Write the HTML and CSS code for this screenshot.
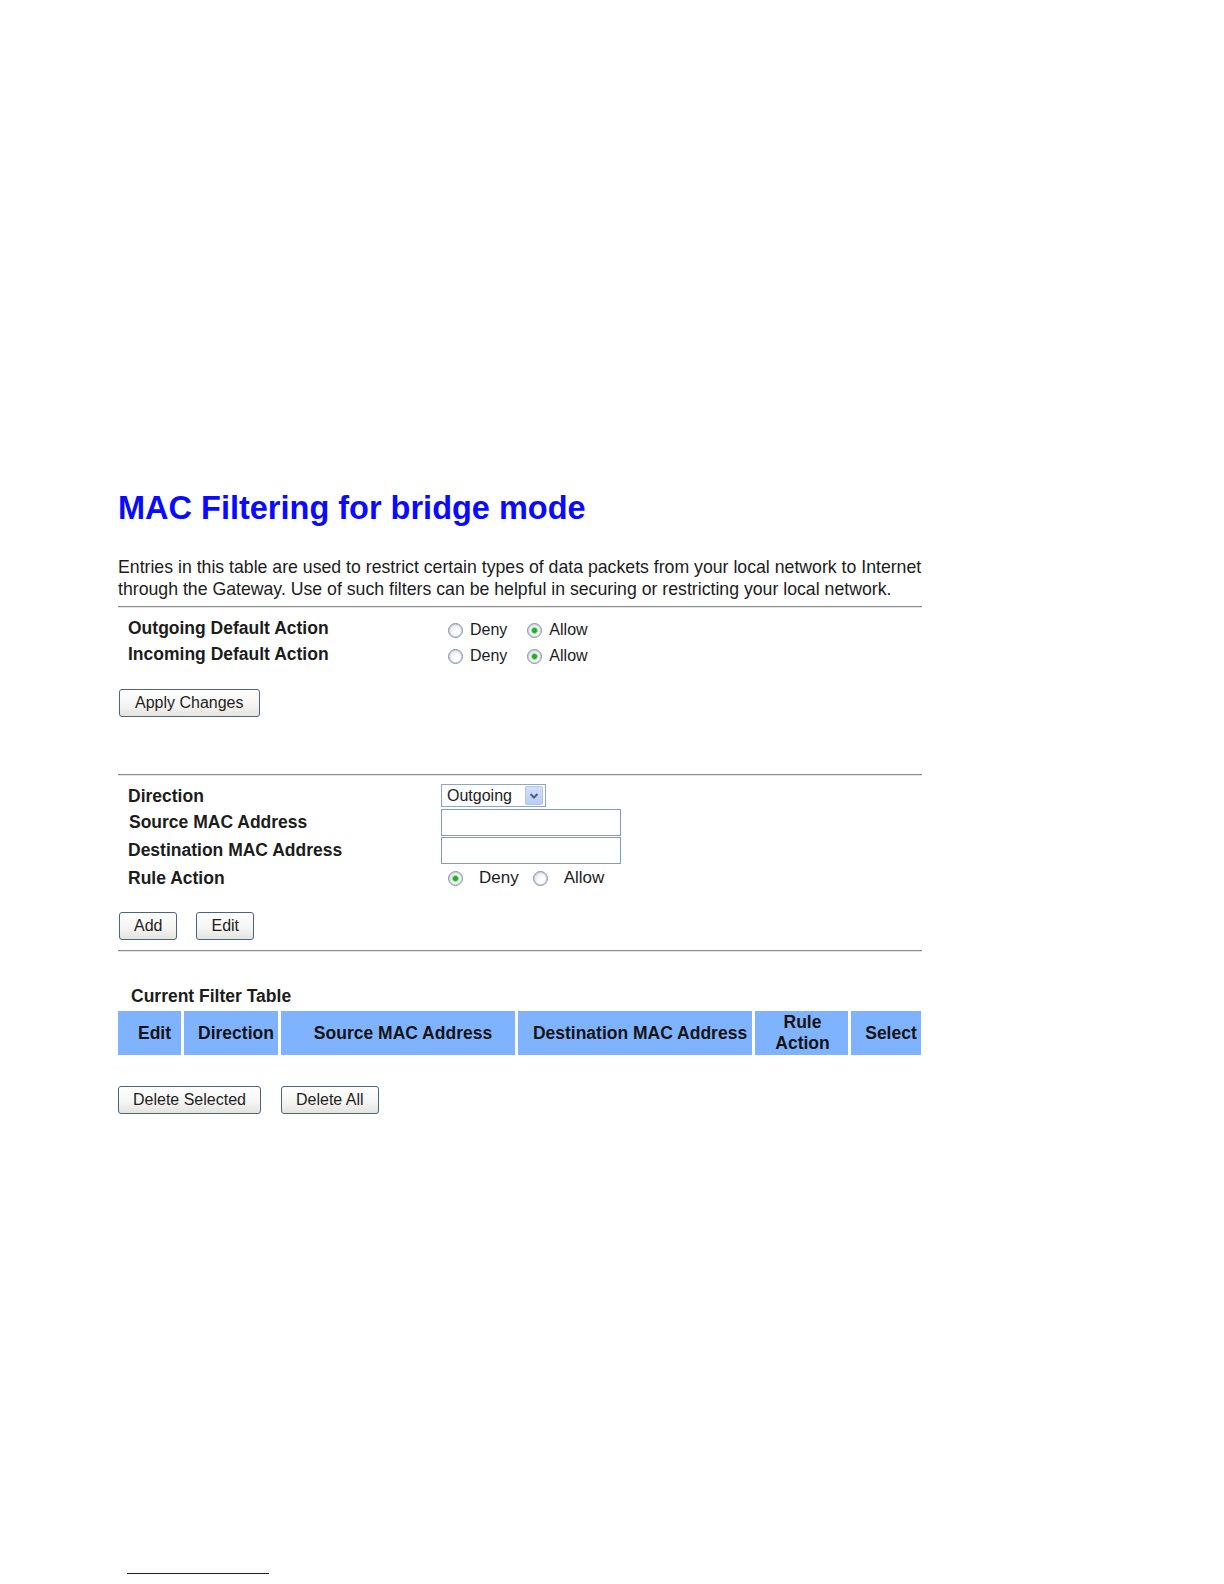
FILE: index.html
```html
<!DOCTYPE html>
<html lang="en">
<head>
  <meta charset="utf-8">
  <title>MAC Filtering for bridge mode</title>
  <link rel="stylesheet" href="styles.css">
</head>
<body>

  <div class="page">
    <h1 class="title">MAC Filtering for bridge mode</h1>
    <p class="intro">Entries in this table are used to restrict certain types of data packets from your local network to Internet<br>through the Gateway. Use of such filters can be helpful in securing or restricting your local network.</p>
    <div class="rule"></div>

    <div class="defaults">
      <span class="label">Outgoing Default Action</span>
      <span class="choices">
        <label class="choice"><input type="radio" name="outgoing">Deny</label>
        <label class="choice"><input type="radio" name="outgoing" checked>Allow</label>
      </span>
      <span class="label">Incoming Default Action</span>
      <span class="choices">
        <label class="choice"><input type="radio" name="incoming">Deny</label>
        <label class="choice"><input type="radio" name="incoming" checked>Allow</label>
      </span>
    </div>

    <div class="buttons apply-row">
      <button>Apply Changes</button>
    </div>

    <div class="rule rule-wide"></div>

    <div class="rule-form">
      <span class="label">Direction</span>
      <div class="select">
        <span class="select-text">Outgoing</span>
        <span class="select-arrow">
          <svg width="10" height="8" viewBox="0 0 10 8"><path d="M1.5 2 L5 5.5 L8.5 2" fill="none" stroke="#4d5f86" stroke-width="2"/></svg>
        </span>
      </div>
      <span class="label label-indent">Source MAC Address</span>
      <input type="text" class="mac">
      <span class="label">Destination MAC Address</span>
      <input type="text" class="mac">
      <span class="label">Rule Action</span>
      <span class="choices choices-big">
        <label class="choice"><input type="radio" name="action" checked>Deny</label>
        <label class="choice"><input type="radio" name="action">Allow</label>
      </span>
    </div>

    <div class="buttons add-row">
      <button>Add</button>
      <button>Edit</button>
    </div>

    <div class="rule"></div>

    <div class="table-title">Current Filter Table</div>
    <table class="filter-table">
      <colgroup>
        <col style="width:63px">
        <col style="width:94px">
        <col style="width:234px">
        <col style="width:234px">
        <col style="width:93px">
        <col style="width:70px">
      </colgroup>
      <thead>
        <tr>
          <th>Edit</th>
          <th>Direction</th>
          <th>Source MAC Address</th>
          <th>Destination MAC Address</th>
          <th class="th-rule">Rule<br>Action</th>
          <th>Select</th>
        </tr>
      </thead>
      <tbody></tbody>
    </table>

    <div class="buttons delete-row">
      <button>Delete Selected</button>
      <button>Delete All</button>
    </div>

    <div class="footnote-line"></div>
  </div>

</body>
</html>
```

FILE: styles.css
```css
body {
  margin: 0;
  background-color: #ffffff;
  color: #1c1c1c;
  font-family: "Liberation Sans", Arial, sans-serif;
}

.page {
  width: 804px;
  padding: 490px 0 0 118px;
}

.title {
  margin: 0;
  font-size: 32.5px;
  line-height: 36px;
  font-weight: bold;
  color: #0a0aff;
}

.intro {
  margin: 30px 0 0 0;
  font-size: 17.7px;
  line-height: 22px;
  white-space: nowrap;
}

.rule {
  margin-top: 6px;
  height: 0;
  border-top: 1px solid #8c8c8c;
  border-bottom: 1px solid #e4e4e4;
}

.rule-wide {
  margin-top: 57px;
}

.label {
  padding-left: 10px;
  font-size: 17.5px;
  font-weight: bold;
}

.label-indent {
  padding-left: 11px;
}

.defaults {
  display: grid;
  grid-template-columns: 323px auto;
  grid-auto-rows: 26px;
  align-items: center;
  margin-top: 7px;
}

.choices {
  display: flex;
  align-items: center;
  gap: 20px;
  padding-left: 7px;
  margin-top: 4px;
  font-size: 16px;
}

.choice {
  display: flex;
  align-items: center;
  gap: 7px;
}

.choices-big {
  gap: 14px;
  margin-top: 0;
  font-size: 17px;
}

.choices-big .choice {
  gap: 16px;
}

input[type="radio"] {
  appearance: none;
  -webkit-appearance: none;
  width: 15px;
  height: 15px;
  margin: 0;
  border: 1px solid #7f94ab;
  border-radius: 50%;
  box-shadow: inset 0 0 0 1px #c9d1da;
  background: radial-gradient(circle at 62% 65%, #ffffff 0, #ffffff 25%, #d4d8de 100%);
}

input[type="radio"]:checked {
  background:
    radial-gradient(circle at 50% 50%, #22ad22 0, #22ad22 2px, #9fd79f 3px, transparent 3.8px),
    radial-gradient(circle at 62% 65%, #ffffff 0, #ffffff 25%, #d4d8de 100%);
}

.buttons {
  display: flex;
  gap: 19px;
  padding-left: 1px;
}

button {
  height: 28px;
  padding: 0 15px;
  border: 1px solid #4a6482;
  border-radius: 3px;
  background: linear-gradient(#ffffff, #f4f4f2 60%, #e4e3dc);
  color: #1e1e1e;
  font-family: "Liberation Sans", Arial, sans-serif;
  font-size: 16px;
}

.apply-row {
  margin-top: 22px;
}

.rule-form {
  display: grid;
  grid-template-columns: 323px auto;
  grid-template-rows: 24px 27px 27px 26px;
  row-gap: 1px;
  align-items: center;
  justify-items: start;
  margin-top: 8px;
}

.select {
  display: flex;
  align-items: center;
  justify-content: space-between;
  box-sizing: border-box;
  width: 105px;
  height: 23px;
  padding: 0 2px 0 5px;
  border: 1px solid #8ea7c0;
  font-size: 16px;
  align-self: start;
}

.select-arrow {
  display: flex;
  align-items: center;
  justify-content: center;
  width: 16px;
  height: 17px;
  background: linear-gradient(#d4e0fb, #b9cdf7);
  border: 1px solid #b3c6ee;
  border-radius: 2px;
}

.mac {
  box-sizing: border-box;
  width: 180px;
  height: 27px;
  margin: 0;
  border: 1px solid #7f9db9;
  font-size: 16px;
}

.add-row {
  margin-top: 21px;
}

.add-row button {
  padding: 0 14px;
}

.rule-form + .add-row + .rule {
  margin-top: 10px;
}

.table-title {
  margin-top: 34px;
  padding-left: 13px;
  font-size: 17.5px;
  font-weight: bold;
  line-height: 20px;
}

.filter-table {
  margin: 5px -3px 0 -3px;
  width: 809px;
  table-layout: fixed;
  border-collapse: separate;
  border-spacing: 3px 0;
}

.filter-table th {
  height: 44px;
  padding: 0 0 0 10px;
  background-color: #80b3ff;
  color: #141414;
  font-size: 17.5px;
  font-weight: bold;
  line-height: 21px;
  text-align: center;
  white-space: nowrap;
}

.filter-table th.th-rule {
  padding-left: 2px;
}

.delete-row {
  margin-top: 31px;
  padding-left: 0;
  gap: 20px;
}

.delete-row button {
  padding: 0 14px;
}

.footnote-line {
  margin: 459px 0 0 9px;
  width: 142px;
  border-top: 1px solid #12128a;
}
```
